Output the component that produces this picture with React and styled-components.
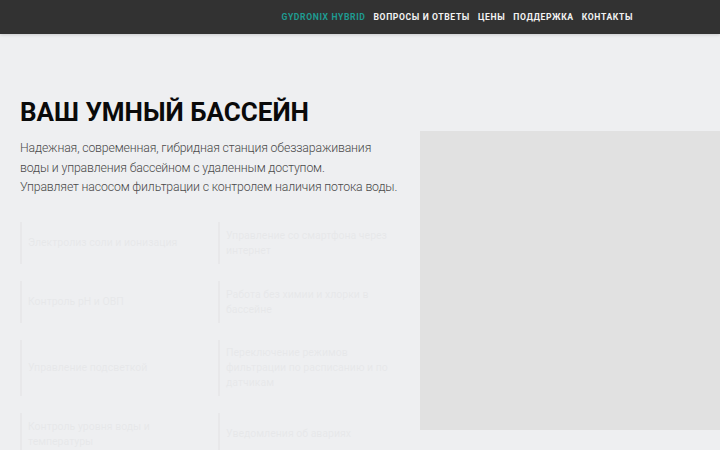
import React from "react";
import styled, {createGlobalStyle} from "styled-components";

const GlobalStyle = createGlobalStyle`
  html, body {
    margin: 0;
    padding: 0;
    background: #eeeff1;
    font-family: Roboto, "Liberation Sans", sans-serif;
    overflow: hidden;
  }
`;

const Header = styled.header`
  height: 34px;
  background: #323232;
  display: flex;
  align-items: center;
  justify-content: flex-end;
  padding-right: 87px;
  box-shadow: 0 1px 3px rgba(0, 0, 0, 0.15);
`;

const Nav = styled.nav`
  display: flex;
  gap: 8px;
`;

const NavLink = styled.a`
  font-size: 8.6px;
  font-weight: 700;
  letter-spacing: 0.62px;
  text-transform: uppercase;
  color: ${props => props.$brand ? '#1e9b91' : '#f2f2f2'};
  text-decoration: none;
  line-height: 1;
`;

const Hero = styled.section`
  display: grid;
  grid-template-columns: 380px 320px;
  column-gap: 20px;
  padding: 63px 0 0 20px;
`;

const Left = styled.div`
  display: flex;
  flex-direction: column;
`;

const Title = styled.h1`
  margin: 0;
  font-size: 26px;
  font-weight: 700;
  color: #0a0a0a;
  line-height: 30px;
`;

const Lead = styled.p`
  margin: 12px 0 0;
  font-size: 12.3px;
  font-weight: 300;
  letter-spacing: -0.15px;
  line-height: 19.5px;
  color: #4a4a4a;
  white-space: nowrap;
`;

const Features = styled.div`
  margin-top: 24px;
  display: grid;
  grid-template-columns: 198px 182px;
  row-gap: 17px;
  opacity: 0.03;
`;

const Feature = styled.div`
  min-height: ${props => props.$tall ? '56px' : '42px'};
  border-left: 2px solid #444;
  padding: 0 8px 0 6px;
  display: flex;
  align-items: center;
  font-size: 10.5px;
  line-height: 15px;
  color: #222;
`;

const Picture = styled.div`
  margin-top: 34px;
  height: 299px;
  background: #e1e1e1;
`;

const features = [
  ['Электролиз соли и ионизация', 'Управление со смартфона через интернет', false],
  ['Контроль pH и ОВП', 'Работа без химии и хлорки в бассейне', false],
  ['Управление подсветкой', 'Переключение режимов фильтрации по расписанию и по датчикам', true],
  ['Контроль уровня воды и температуры', 'Уведомления об авариях', false],
];

export default function App() {
  return (
    <>
      <GlobalStyle/>
      <Header>
        <Nav>
          <NavLink $brand>Gydronix Hybrid</NavLink>
          <NavLink>Вопросы и ответы</NavLink>
          <NavLink>Цены</NavLink>
          <NavLink>Поддержка</NavLink>
          <NavLink>Контакты</NavLink>
        </Nav>
      </Header>
      <Hero>
        <Left>
          <Title>ВАШ УМНЫЙ БАССЕЙН</Title>
          <Lead>
            Надежная, современная, гибридная станция обеззараживания<br/>
            воды и управления бассейном с удаленным доступом.<br/>
            Управляет насосом фильтрации с контролем наличия потока воды.
          </Lead>
          <Features>
            {features.map(([a, b, tall], i) => (
              <React.Fragment key={i}>
                <Feature $tall={tall}>{a}</Feature>
                <Feature $tall={tall}>{b}</Feature>
              </React.Fragment>
            ))}
          </Features>
        </Left>
        <Picture/>
      </Hero>
    </>
  );
}
